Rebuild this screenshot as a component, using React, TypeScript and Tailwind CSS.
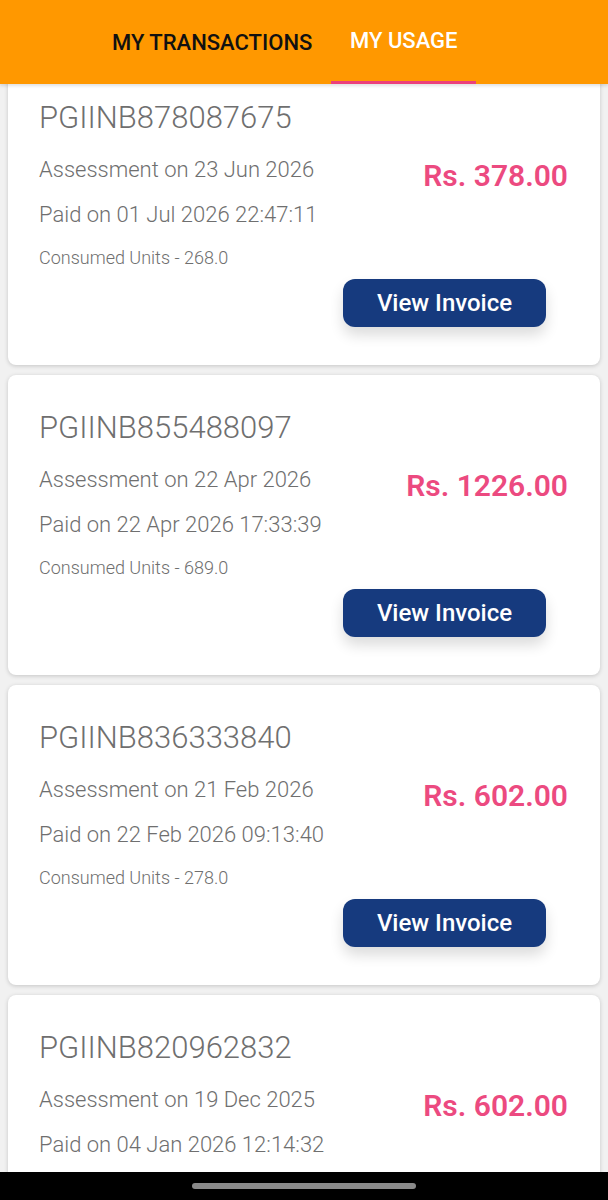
import React from 'react';

type Usage = {
  id: string;
  assessed: string;
  paid: string;
  units: string;
  amount: string;
};

const usages: Usage[] = [
  { id: 'PGIINB878087675', assessed: '23 Jun 2026', paid: '01 Jul 2026 22:47:11', units: '268.0', amount: '378.00' },
  { id: 'PGIINB855488097', assessed: '22 Apr 2026', paid: '22 Apr 2026 17:33:39', units: '689.0', amount: '1226.00' },
  { id: 'PGIINB836333840', assessed: '21 Feb 2026', paid: '22 Feb 2026 09:13:40', units: '278.0', amount: '602.00' },
  { id: 'PGIINB820962832', assessed: '19 Dec 2025', paid: '04 Jan 2026 12:14:32', units: '278.0', amount: '602.00' },
];

const font = { fontFamily: 'Roboto, "Noto Sans", sans-serif' };

const UsageCard: React.FC<{ item: Usage }> = ({ item }) => (
  <div className="h-[300px] shrink-0 rounded-lg bg-white shadow-[0_1px_4px_rgba(0,0,0,0.18)] flex justify-between pl-[31px] pr-[32px]">
    <div className="flex flex-col pt-[35px] text-[#6f6f6f] font-light whitespace-nowrap">
      <div className="text-[31px] leading-[36px]">{item.id}</div>
      <div className="mt-[20px] text-[22px] leading-[28px]">Assessment on {item.assessed}</div>
      <div className="mt-[17px] text-[22px] leading-[28px]">Paid on {item.paid}</div>
      <div className="mt-[17px] text-[18px] leading-[24px]">Consumed Units - {item.units}</div>
    </div>
    <div className="flex flex-col items-end pt-[93px]">
      <div className="text-[30px] leading-[36px] font-semibold text-[#ec4a80] whitespace-nowrap">Rs. {item.amount}</div>
      <button className="mt-[85px] mr-[22px] h-[48px] w-[203px] rounded-xl bg-[#163a7e] text-white text-[24px] font-medium shadow-[0_8px_14px_rgba(0,0,0,0.14)]">
        View Invoice
      </button>
    </div>
  </div>
);

export default function App() {
  return (
    <div className="w-[608px] h-[1200px] flex flex-col bg-[#f1f1f1] overflow-hidden" style={font}>
      <div className="h-[84px] shrink-0 bg-[#ff9800] flex z-10 shadow-[0_2px_3px_rgba(0,0,0,0.12)] pl-[93px]">
        <div className="h-full flex items-center px-[19px] text-[22px] font-medium text-[#111] whitespace-nowrap">MY TRANSACTIONS</div>
        <div className="h-full flex flex-col w-[145px]">
          <div className="flex-1 flex items-center justify-center text-[22px] font-medium text-white whitespace-nowrap">MY USAGE</div>
          <div className="h-[3px] bg-[#ec407a]" />
        </div>
      </div>
      <div className="flex-1 overflow-hidden">
        <div className="-mt-[19px] flex flex-col gap-[10px] px-2">
          {usages.map((u) => (
            <UsageCard key={u.id} item={u} />
          ))}
        </div>
      </div>
      <div className="h-[28px] shrink-0 bg-black flex items-center justify-center">
        <div className="w-[224px] h-[6px] rounded-full bg-[#8a8a8a]" />
      </div>
    </div>
  );
}
